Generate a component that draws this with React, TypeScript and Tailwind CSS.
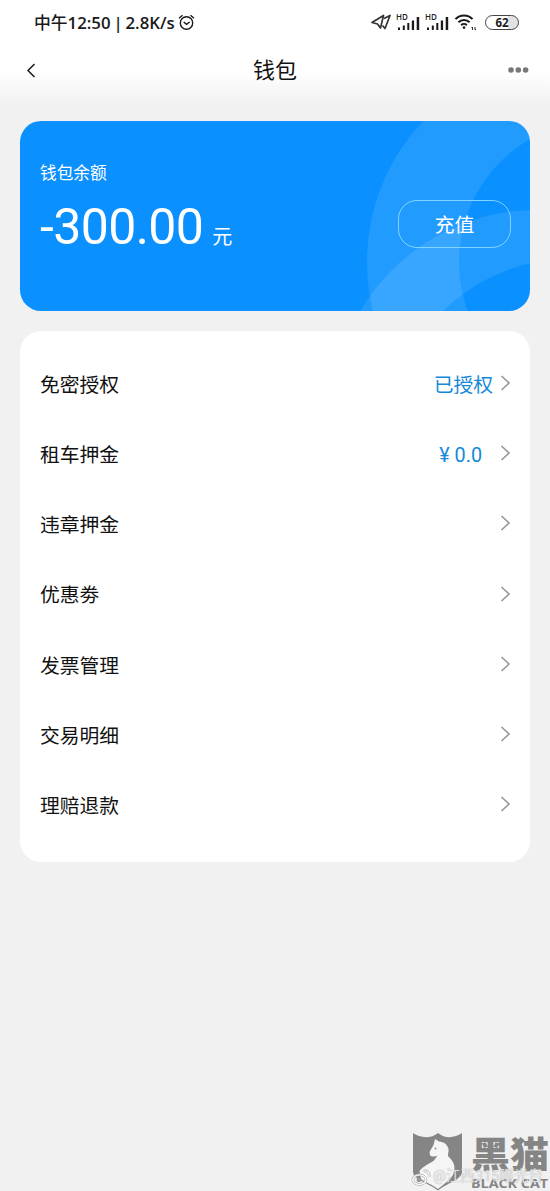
type WalletItem = {
  label: string;
  value?: string;
  valueClass?: string;
};

const items: WalletItem[] = [
  { label: '免密授权', value: '已授权', valueClass: 'mr-[7px]' },
  { label: '租车押金', value: '¥ 0.0', valueClass: 'mr-[18px]' },
  { label: '违章押金' },
  { label: '优惠劵' },
  { label: '发票管理' },
  { label: '交易明细' },
  { label: '理赔退款' },
];

function SignalIcon() {
  return (
    <svg width="26" height="20" viewBox="0 -2 26 20" className="shrink-0 overflow-visible">
      <text x="0" y="6" fontSize="8" fontWeight="600" fill="#222" className="font-['Open_Sans',sans-serif]">
        HD
      </text>
      <g fill="#1a1a1a">
        <rect x="2" y="13.5" width="2" height="2.5" />
        <rect x="6.8" y="11.5" width="2" height="4.5" />
        <rect x="11.3" y="9" width="2" height="7" />
        <rect x="15.8" y="6.5" width="2.3" height="9.5" />
        <rect x="20.7" y="3" width="2.5" height="13" />
      </g>
    </svg>
  );
}

function StatusBar() {
  return (
    <div className="flex h-[44px] items-center pl-[34px] pr-[31px] text-[#1a1a1a]">
      <span className="whitespace-nowrap pt-[2px] font-['Open_Sans','Noto_Sans_CJK_SC',sans-serif] text-[16.8px] font-semibold [word-spacing:-1.5px]">
        <span className="font-medium">中午</span>12:50 | 2.8K/s
      </span>
      <svg width="17" height="17" viewBox="0 0 17 17" className="ml-[3px]" fill="none" stroke="#1a1a1a" strokeWidth="1.4">
        <circle cx="8.5" cy="9" r="6.2" />
        <path d="M1 4.3L4.5 1.2M16 4.3L12.5 1.2M5.7 8L8.5 10.3L11.7 8" />
      </svg>
      <div className="ml-auto flex items-center">
        <svg width="21" height="17" viewBox="0 0 21 17" fill="none" stroke="#333" strokeWidth="1.7" strokeLinejoin="round">
          <path d="M1 8.5L12.5 1.5L9.5 14L6.5 10Z" />
          <path d="M13 4.5L19 1.5L14 14.5L11.5 11.5" />
        </svg>
        <div className="ml-[4px] flex gap-[3px]">
          <SignalIcon />
          <SignalIcon />
        </div>
        <svg width="24" height="18" viewBox="0 0 24 18" className="ml-[3px]" fill="none" stroke="#1a1a1a">
          <path d="M1.5 6.2C6 1.2 14 1.2 18.5 6.2M4.4 9.3C7.4 6.1 12.6 6.1 15.6 9.3M7.2 12.2C8.8 10.6 11.2 10.6 12.8 12.2" strokeWidth="2" />
          <circle cx="10" cy="14.6" r="1.3" fill="#1a1a1a" stroke="none" />
          <path d="M18.5 17V14L17.5 15M21 14V17L22 16" strokeWidth="0.9" />
        </svg>
        <div className="ml-[7px] flex h-[15px] w-[34px] items-center justify-center rounded-full border-[1.5px] border-[#444] bg-[linear-gradient(90deg,#fff_68%,#e2e2e2_68%)] pt-px font-['Open_Sans',sans-serif] text-[11.5px] leading-none font-bold">
          62
        </div>
      </div>
    </div>
  );
}

function Header() {
  return (
    <div className="flex h-[52px] items-center justify-between pl-[26px] pr-[21px]">
      <svg width="21" height="15" viewBox="0 0 21 15" fill="none" stroke="#111" strokeWidth="1.4">
        <path d="M8.5 1L2 7.5L8.5 14" />
      </svg>
      <h1 className="mr-[5px] pt-[2px] text-[22px] leading-none text-[#111]">钱包</h1>
      <svg width="21" height="6" viewBox="0 0 21 6" fill="#777">
        <circle cx="3" cy="3" r="2.8" />
        <circle cx="10.3" cy="3" r="2.8" />
        <circle cx="17.6" cy="3" r="2.8" />
      </svg>
    </div>
  );
}

function BalanceCard() {
  return (
    <section className="relative mx-5 mt-[25px] h-[190px] overflow-hidden rounded-[21px] bg-[#0a90ff] text-white">
      <svg width="510" height="190" viewBox="20 121 510 190" className="absolute inset-0" fill="#fff" fillRule="evenodd">
        <path
          fillOpacity="0.1"
          d="M367 262a205 205 0 1 0 410 0a205 205 0 1 0 -410 0ZM459 262a142 142 0 1 0 284 0a142 142 0 1 0 -284 0Z"
        />
        <path
          fillOpacity="0.1"
          d="M332 415a205 205 0 1 1 410 0a205 205 0 1 1 -410 0ZM386 446a188 188 0 1 1 376 0a188 188 0 1 1 -376 0Z"
        />
      </svg>
      <div className="relative flex h-full items-start justify-between pl-5 pr-[19px]">
        <div className="pt-[41px]">
          <p className="text-[16.7px] leading-6">钱包余额</p>
          <div className="mt-[11px] flex items-baseline leading-[60px]">
            <span className="text-[50px] tracking-[-0.6px]">-300.00</span>
            <span className="ml-[9px] text-[20px]">元</span>
          </div>
        </div>
        <button className="mt-[79px] h-[48px] w-[113px] rounded-[19px] border border-[#7fd4ff] pt-[3px] text-[19.8px]">充值</button>
      </div>
    </section>
  );
}

function ItemRow({ label, value, valueClass }: WalletItem) {
  return (
    <li className="flex h-[70.2px] items-center pl-5 pr-[19px]">
      <span className="pt-[5px] text-[19.8px] text-[#111]">{label}</span>
      <span className={`ml-auto pt-[5px] text-[19.8px] text-[#1489d8] ${valueClass ?? ''}`}>{value}</span>
      <svg width="11" height="16" viewBox="0 0 11 16" fill="none" stroke="#999" strokeWidth="1.7">
        <path d="M1.5 1L9 8L1.5 15" />
      </svg>
    </li>
  );
}

function Watermark() {
  return (
    <div className="absolute bottom-0 right-0 h-[60px] w-[139px]">
      <svg width="139" height="60" viewBox="0 0 139 60" className="absolute inset-0 overflow-visible">
        <path d="M2 2C9 7 20 8 27 2C34 8 44 7 51 2V41C50 49 38 51 27 59.5C16 51 3 49 2 41Z" fill="#858585" />
        <path
          d="M24 8L28 10.5C33 11 36 13 37.5 18C38 21 36.5 23 37 25C40 28 43.5 32 43.5 37C43.5 47 34 52 27 58C22 54 14 51 10 48L8.5 40C12 35 20 32 23 29.5L26.5 24.5C24 26 20 26 19 24L18.5 21L22.5 14Z"
          fill="#f5f5f5"
        />
        <circle cx="24.5" cy="17.5" r="0.9" fill="#858585" />
        <text x="60" y="37" fontSize="36" fontWeight="900" fill="#858585" textLength="78" lengthAdjust="spacingAndGlyphs" className="font-['Noto_Sans_CJK_SC',sans-serif]">
          黑猫
        </text>
        <text x="60" y="57" fontSize="13" fontWeight="700" fill="#858585" textLength="77" lengthAdjust="spacingAndGlyphs" className="font-['Open_Sans',sans-serif]">
          BLACK CAT
        </text>
      </svg>
      <div className="absolute bottom-[5px] left-0 flex items-center whitespace-nowrap text-[14.5px] leading-none text-white/70 [text-shadow:0_0_1px_#999]">
        <svg width="20" height="17" viewBox="0 0 18 16" fill="none">
          <g stroke="#aaa" strokeWidth="2.4">
            <ellipse cx="7.5" cy="10" rx="6.2" ry="4.5" />
            <path d="M11 2C15 1 17.5 4 16.5 7.5" />
          </g>
          <g stroke="#fff" strokeWidth="1.3">
            <ellipse cx="7.5" cy="10" rx="6.2" ry="4.5" />
            <path d="M11 2C15 1 17.5 4 16.5 7.5M11.5 4.7C13.5 4.3 14.5 5.5 14 7" />
          </g>
          <circle cx="7" cy="10.3" r="2.2" fill="#999" />
        </svg>
        <span className="ml-[2px]">@江西315曝光台</span>
      </div>
    </div>
  );
}

export default function App() {
  return (
    <div className="relative h-[1191px] w-[550px] overflow-hidden bg-[#f1f1f1] font-[Roboto,'Noto_Sans_CJK_SC',sans-serif]">
      <div className="h-[96px] bg-white">
        <div className="h-[106px] bg-[linear-gradient(#fff_72px,#f1f1f1_104px)]">
          <StatusBar />
          <Header />
        </div>
      </div>
      <BalanceCard />
      <ul className="mx-5 mt-5 h-[531px] rounded-[21px] bg-white pt-[17px]">
        {items.map((item) => (
          <ItemRow key={item.label} {...item} />
        ))}
      </ul>
      <Watermark />
    </div>
  );
}
